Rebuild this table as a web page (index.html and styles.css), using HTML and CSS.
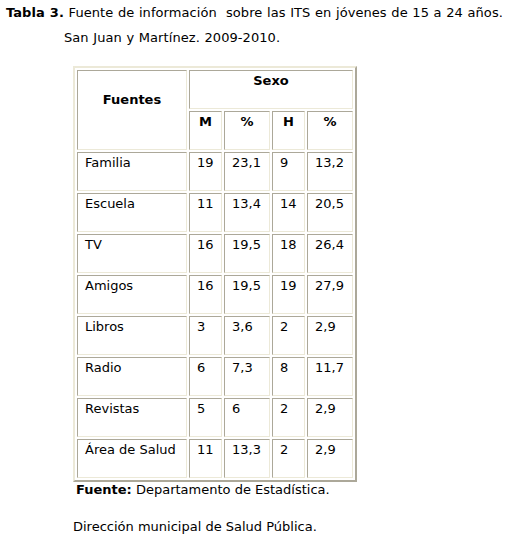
FILE: index.html
```html
<!DOCTYPE html>
<html lang="es">
<head>
<meta charset="utf-8">
<title>Tabla 3</title>
<link rel="stylesheet" href="styles.css">
</head>
<body>
<div class="caption">
  <div class="cap-line"><b>Tabla 3.</b> Fuente de información&nbsp; sobre las ITS en jóvenes de 15 a 24 años.</div>
  <div class="cap-line cap-indent">San Juan y Martínez. 2009-2010.</div>
</div>
<table class="data">
  <tr>
    <th rowspan="2" class="c-fuentes th-fuentes">Fuentes</th>
    <th colspan="4" class="th-sexo">Sexo</th>
  </tr>
  <tr>
    <th class="c-n">M</th>
    <th class="c-p">%</th>
    <th class="c-n">H</th>
    <th class="c-p">%</th>
  </tr>
  <tr><td>Familia</td><td>19</td><td>23,1</td><td>9</td><td>13,2</td></tr>
  <tr><td>Escuela</td><td>11</td><td>13,4</td><td>14</td><td>20,5</td></tr>
  <tr><td>TV</td><td>16</td><td>19,5</td><td>18</td><td>26,4</td></tr>
  <tr><td>Amigos</td><td>16</td><td>19,5</td><td>19</td><td>27,9</td></tr>
  <tr><td>Libros</td><td>3</td><td>3,6</td><td>2</td><td>2,9</td></tr>
  <tr><td>Radio</td><td>6</td><td>7,3</td><td>8</td><td>11,7</td></tr>
  <tr><td>Revistas</td><td>5</td><td>6</td><td>2</td><td>2,9</td></tr>
  <tr><td>Área de Salud</td><td>11</td><td>13,3</td><td>2</td><td>2,9</td></tr>
</table>
<div class="note note-src"><b>Fuente:</b> Departamento de Estadística.</div>
<div class="note note-dir">Dirección municipal de Salud Pública.</div>
</body>
</html>
```
FILE: styles.css
```css
html, body {
  margin: 0;
  padding: 0;
  background: #ffffff;
}
body {
  font-family: "DejaVu Sans", Verdana, sans-serif;
  font-size: 13px;
  line-height: 15px;
  color: #000000;
}
.caption {
  padding-top: 5px;
  word-spacing: 0.4px;
  letter-spacing: 0.07px;
}
.cap-line {
  padding-left: 6px;
  white-space: nowrap;
}
.cap-indent {
  padding-left: 64px;
  margin-top: 10px;
}
.data {
  margin: 21px 0 0 73px;
  border-collapse: separate;
  border-spacing: 2px;
  border-style: solid;
  border-width: 2px;
  border-color: #ece9d8 #aca899 #aca899 #ece9d8;
}
.data th,
.data td {
  border-style: solid;
  border-width: 1px;
  border-color: #aca899 #ece9d8 #ece9d8 #aca899;
  padding: 2px 7px 20px 7px;
  vertical-align: top;
  text-align: left;
  font-weight: normal;
  white-space: nowrap;
}
.data th {
  font-weight: bold;
  text-align: center;
}
.data th.th-fuentes {
  padding-top: 21px;
  padding-bottom: 0;
}
.c-fuentes { width: 94px; }
.c-n { width: 17px; }
.c-p { width: 30px; }
.note {
  white-space: nowrap;
}
.note-src {
  margin-top: 0;
  padding-left: 76px;
}
.note-dir {
  margin-top: 22px;
  padding-left: 73px;
}
```
